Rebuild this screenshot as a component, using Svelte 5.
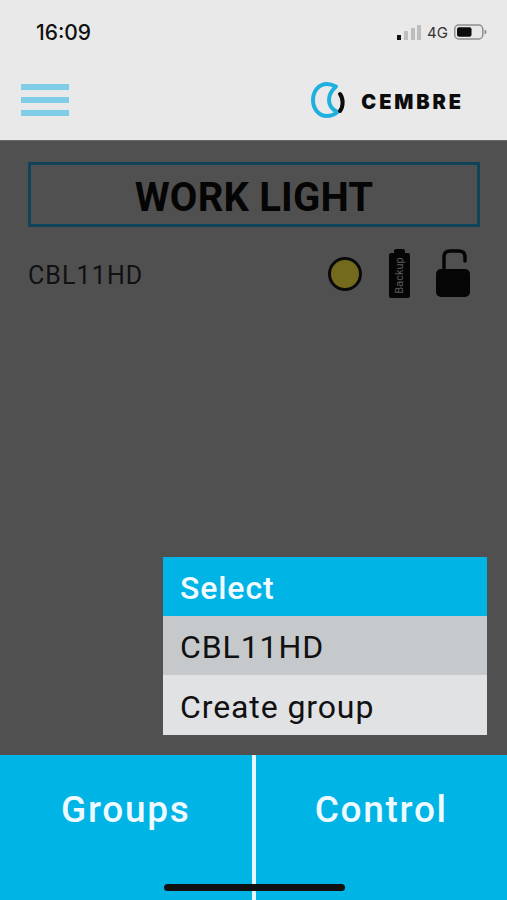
<script lang="ts">
  const bars = [
    { h: 5, on: true },
    { h: 9, on: false },
    { h: 12, on: false },
    { h: 15, on: false }
  ];
</script>

<div class="screen">
  <header class="top">
    <div class="status">
      <span class="time">16:09</span>
      <div class="status-right">
        <div class="signal">
          {#each bars as bar}
            <i class:on={bar.on} style="height: {bar.h}px"></i>
          {/each}
        </div>
        <span class="net">4G</span>
        <svg class="battery" width="33" height="16" viewBox="0 0 33 16">
          <rect x="0.75" y="1" width="28" height="14" rx="4" fill="none" stroke="#8e8e8e" stroke-width="1.5" />
          <rect x="3" y="3.2" width="14.5" height="9.6" rx="2" fill="#0c0c0c" />
          <path d="M30.5 5.5c1.4.4 2 1.3 2 2.5s-.6 2.1-2 2.5z" fill="#8e8e8e" />
        </svg>
      </div>
    </div>
    <div class="nav">
      <div class="burger"><i></i><i></i><i></i></div>
      <div class="logo">
        <svg width="38" height="38" viewBox="0 0 38 38">
          <path d="M27 5.500C23 3.500 20 3 18 3C9.500 3 4 10.500 4 19C4 27.500 9.500 35 18 35C21 35 25 34 28.500 31C23 28.500 20 24.500 20 19C20 13.500 23 9 27 5.500Z" fill="none" stroke="#1fb0de" stroke-width="4" stroke-linejoin="round" />
          <path d="M31 13C34.500 17.500 34.500 25.500 31 30" fill="none" stroke="#0c0c0c" stroke-width="4" stroke-linecap="round" />
        </svg>
        <span>CEMBRE</span>
      </div>
    </div>
  </header>

  <main class="content">
    <h1 class="title">WORK LIGHT</h1>
    <div class="device">
      <span class="name">CBL11HD</span>
      <div class="icons">
        <span class="led"></span>
        <div class="backup"><span>Backup</span></div>
        <svg class="lock" width="34" height="48" viewBox="0 0 34 48">
          <path d="M8 22V8C8 4 10 2 14 2H23C27 2 29 4 29 8V12" fill="none" stroke="#050505" stroke-width="3.500" stroke-linecap="round" />
          <rect x="0" y="20" width="34" height="28" rx="5" fill="#050505" />
        </svg>
      </div>
    </div>
  </main>

  <div class="menu">
    <div class="menu-head">Select</div>
    <div class="menu-item active">CBL11HD</div>
    <div class="menu-item last">Create group</div>
  </div>

  <footer class="tabs">
    <div class="tab">Groups</div>
    <div class="tab">Control</div>
  </footer>
  <div class="home"></div>
</div>

<style>
  :global(body) {
    margin: 0;
    background: #505050;
  }

  .screen {
    position: relative;
    width: 507px;
    height: 900px;
    display: flex;
    flex-direction: column;
    overflow: hidden;
    font-family: Roboto, "Liberation Sans", sans-serif;
  }

  .top {
    height: 141px;
    flex: none;
    background: #e9e9e9;
    box-sizing: border-box;
    border-bottom: 1px solid #6a6a6a;
  }

  .status {
    height: 62px;
    display: flex;
    align-items: center;
    justify-content: space-between;
    padding: 2px 20px 0 36px;
    box-sizing: border-box;
  }

  .time {
    font-family: Inter, sans-serif;
    font-size: 21px;
    font-weight: 500;
    color: #111;
  }

  .status-right {
    display: flex;
    align-items: center;
  }

  .signal {
    display: flex;
    align-items: flex-end;
    gap: 2.6px;
    height: 15px;
    margin-right: 6px;
  }

  .signal i {
    width: 4px;
    background: #bdbdbd;
  }

  .signal i.on {
    background: #111;
  }

  .net {
    font-family: Inter, sans-serif;
    font-size: 15px;
    color: #333;
    margin-right: 6px;
  }

  .nav {
    height: 78px;
    display: flex;
    align-items: flex-start;
    justify-content: space-between;
    padding: 19px 43px 0 21px;
  }

  .burger {
    width: 48px;
    display: flex;
    flex-direction: column;
    gap: 7px;
    padding-top: 3px;
  }

  .burger i {
    height: 6px;
    background: #7fcde6;
  }

  .logo {
    display: flex;
    align-items: center;
    gap: 14px;
    height: 38px;
  }

  .logo span {
    font-family: Inter, sans-serif;
    font-weight: 900;
    font-size: 20px;
    letter-spacing: 2.9px;
    color: #0c0c0c;
    margin-top: 4px;
  }

  .content {
    flex: 1;
    background: #505050;
    padding: 21px 27px 0 28px;
  }

  .title {
    margin: 0;
    height: 65px;
    box-sizing: border-box;
    border: 3px solid #0f4458;
    padding-top: 5px;
    display: flex;
    align-items: center;
    justify-content: center;
    font-size: 40px;
    font-weight: 700;
    letter-spacing: 0.2px;
    color: #050505;
  }

  .device {
    margin-top: 23px;
    display: flex;
    align-items: center;
    justify-content: space-between;
    padding: 0 10px 0 0;
    height: 50px;
  }

  .name {
    font-size: 25px;
    letter-spacing: 1.1px;
    color: #111;
  }

  .icons {
    display: flex;
    align-items: center;
  }

  .led {
    width: 28px;
    height: 28px;
    border: 3px solid #0a0a0a;
    border-radius: 50%;
    background: #736a1e;
    margin-right: 27px;
    margin-bottom: 3px;
  }

  .backup {
    position: relative;
    width: 21px;
    height: 45px;
    background: #050505;
    border-radius: 2px;
    margin-right: 26px;
    display: flex;
    align-items: center;
    justify-content: center;
  }

  .backup::before {
    content: "";
    position: absolute;
    top: -4px;
    left: 5px;
    width: 11px;
    height: 4px;
    background: #050505;
    border-radius: 2px 2px 0 0;
  }

  .backup span {
    transform: rotate(-90deg);
    font-size: 11px;
    color: #5c5c5c;
    white-space: nowrap;
  }

  .lock {
    margin-bottom: 4px;
  }

  .menu {
    position: absolute;
    left: 163px;
    top: 557px;
    width: 324px;
  }

  .menu-head,
  .menu-item {
    height: 59px;
    box-sizing: border-box;
    padding: 3px 0 0 17px;
    display: flex;
    align-items: center;
    font-size: 32px;
    letter-spacing: 0.9px;
  }

  .menu-head {
    background: #00b4e6;
    color: #f2fbff;
    font-weight: 500;
  }

  .menu-item {
    background: #e1e2e4;
    color: #111;
  }

  .menu-item.last {
    height: 60px;
  }

  .menu-item.active {
    background: #c6c9cc;
  }

  .tabs {
    height: 145px;
    flex: none;
    display: flex;
    background: #00b4e6;
  }

  .tab {
    flex: 1;
    height: 108px;
    display: flex;
    align-items: center;
    justify-content: center;
    font-size: 37px;
    font-weight: 500;
    letter-spacing: 1.7px;
    color: #eefaff;
  }

  .tab:first-child {
    border-right: 4px solid #e6f7fd;
    height: auto;
    padding-bottom: 37px;
  }

  .home {
    position: absolute;
    left: 164px;
    top: 884px;
    width: 181px;
    height: 7px;
    border-radius: 4px;
    background: #111;
  }
</style>
